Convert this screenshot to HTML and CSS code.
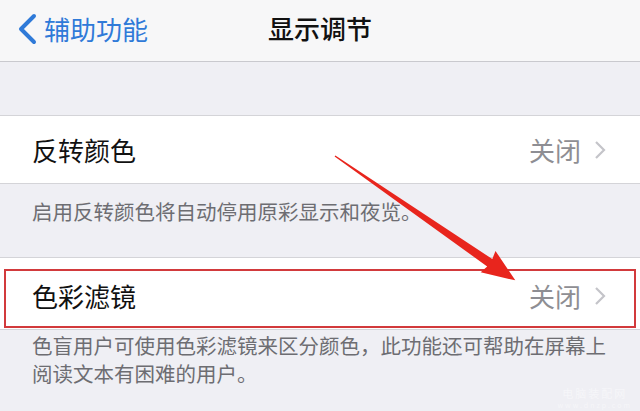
FILE: index.html
```html
<!DOCTYPE html>
<html lang="zh-CN">
<head>
    <meta charset="UTF-8">
    <meta name="viewport" content="width=device-width, initial-scale=1.0">
    <title>显示调节</title>
    <link rel="stylesheet" href="styles.css">
</head>
<body>
    <div class="screen">
        <header class="nav-bar">
            <a class="back" href="#">
                <svg class="back-icon" width="22" height="32" viewBox="0 0 22 32">
                    <path d="M18 3 L5 16 L18 29" fill="none" stroke="#2f7ad8" stroke-width="4" stroke-linecap="round" stroke-linejoin="round"/>
                </svg>
                <span>辅助功能</span>
            </a>
            <h1 class="nav-title">显示调节</h1>
            <div></div>
        </header>

        <div class="spacer"></div>

        <section class="group">
            <div class="row">
                <span class="row-label">反转颜色</span>
                <span class="row-value">关闭
                    <svg class="chevron" width="12" height="20" viewBox="0 0 12 20">
                        <path d="M2 2 L10 10 L2 18" fill="none" stroke="#c4c4c9" stroke-width="2.2"/>
                    </svg>
                </span>
            </div>
        </section>
        <p class="footer footer-first">启用反转颜色将自动停用原彩显示和夜览。</p>

        <section class="group">
            <div class="row row-tall highlight">
                <span class="row-label">色彩滤镜</span>
                <span class="row-value">关闭
                    <svg class="chevron" width="12" height="20" viewBox="0 0 12 20">
                        <path d="M2 2 L10 10 L2 18" fill="none" stroke="#c4c4c9" stroke-width="2.2"/>
                    </svg>
                </span>
            </div>
        </section>
        <p class="footer footer-second">色盲用户可使用色彩滤镜来区分颜色，此功能还可帮助在屏幕上阅读文本有困难的用户。</p>

        <div class="watermark">电脑装配网<br><small>www.dnzp.com</small></div>

        <!-- annotation arrow drawn over the page -->
        <svg class="arrow" width="640" height="411" viewBox="0 0 640 411">
            <g transform="translate(335 156) rotate(34.6)">
                <polygon points="0,-0.7 188,-4.5 186,-13 219,0 186,13 188,4.5 0,0.7" fill="#e8251d"/>
            </g>
        </svg>
    </div>
</body>
</html>
```

FILE: styles.css
```css
body {
    margin: 0;
    background: #efeff4;
    font-family: "Noto Sans CJK SC", "Noto Sans", sans-serif;
}

.screen {
    position: relative;
    width: 640px;
    height: 411px;
    overflow: hidden;
}

.nav-bar {
    display: grid;
    grid-template-columns: 1fr auto 1fr;
    align-items: center;
    height: 61px;
    background: #f7f7f8;
    border-bottom: 1px solid #c9c9ce;
}

.back {
    display: flex;
    align-items: center;
    gap: 6px;
    padding-left: 16px;
    color: #2f7ad8;
    text-decoration: none;
    font-size: 26px;
    margin-top: -4px;
}

.nav-title {
    margin: -6px 0 0;
    font-size: 26px;
    font-weight: 500;
    color: #111;
}

.spacer {
    height: 53px;
}

.group {
    background: #fff;
    border-top: 1px solid #d4d4d8;
    border-bottom: 1px solid #d4d4d8;
}

.row {
    display: flex;
    align-items: center;
    justify-content: space-between;
    height: 67px;
    padding: 0 34px 0 32px;
}

.row-tall {
    height: 71px;
    padding-top: 4px;
    box-sizing: border-box;
}

.highlight {
    position: relative;
}

.highlight::after {
    content: "";
    position: absolute;
    left: 4px;
    right: 4px;
    top: 11px;
    bottom: 1px;
    border: 2px solid #d23a3c;
}

.row-label {
    font-size: 26px;
    color: #111;
}

.row-value {
    display: flex;
    align-items: center;
    gap: 13px;
    font-size: 26px;
    color: #8e8e93;
}

.footer {
    margin: 0;
    padding: 0 32px;
    font-size: 20.5px;
    line-height: 28px;
    color: #6d6d72;
}

.footer-first {
    height: 73px;
    box-sizing: border-box;
    padding-top: 13px;
}

.footer-second {
    padding-top: 1px;
}

.watermark {
    position: absolute;
    right: 8px;
    bottom: 1px;
    text-align: center;
    font-size: 11px;
    line-height: 10px;
    letter-spacing: 2px;
    color: #f6f6f9;
}

.watermark small {
    font-size: 7px;
}

.arrow {
    position: absolute;
    left: 0;
    top: 0;
    pointer-events: none;
}
```
